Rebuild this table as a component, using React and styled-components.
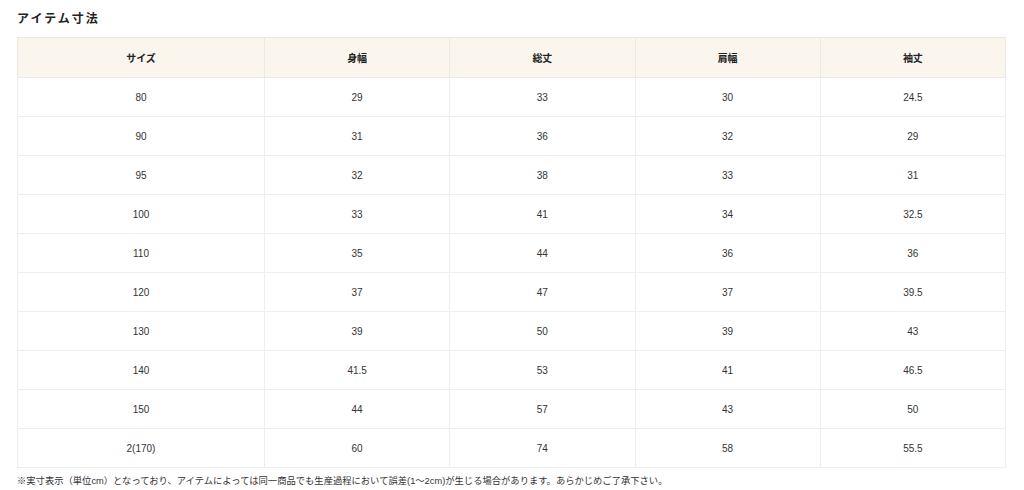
import styled, { createGlobalStyle } from "styled-components";

const GlobalStyle = createGlobalStyle`
  body {
    margin: 0;
    background: #fff;
    font-family: "Liberation Sans", "Noto Sans CJK JP", sans-serif;
    color: #333;
  }
`;

const headers = ["サイズ", "身幅", "総丈", "肩幅", "袖丈"];

const rows = [
  ["80", "29", "33", "30", "24.5"],
  ["90", "31", "36", "32", "29"],
  ["95", "32", "38", "33", "31"],
  ["100", "33", "41", "34", "32.5"],
  ["110", "35", "44", "36", "36"],
  ["120", "37", "47", "37", "39.5"],
  ["130", "39", "50", "39", "43"],
  ["140", "41.5", "53", "41", "46.5"],
  ["150", "44", "57", "43", "50"],
  ["2(170)", "60", "74", "58", "55.5"],
];

const App = () => {
  return (
    <Page>
      <GlobalStyle />
      <Title>アイテム寸法</Title>
      <SizeTable>
        <colgroup>
          <col style={{ width: "25%" }} />
          <col />
          <col />
          <col />
          <col />
        </colgroup>
        <thead>
          <tr>
            {headers.map((h) => (
              <HeadCell key={h}>{h}</HeadCell>
            ))}
          </tr>
        </thead>
        <tbody>
          {rows.map((row) => (
            <tr key={row[0]}>
              {row.map((v, i) => (
                <Cell key={i}>{v}</Cell>
              ))}
            </tr>
          ))}
        </tbody>
      </SizeTable>
      <Note>
        ※実寸表示（単位cm）となっており、アイテムによっては同一商品でも生産過程において誤差(1〜2cm)が生じる場合があります。あらかじめご了承下さい。
      </Note>
    </Page>
  );
};

const Page = styled.div`
  width: 989px;
  padding: 10px 0 0 17px;
`;

const Title = styled.h2`
  margin: 0 0 12px;
  font-family: "Noto Sans CJK JP", sans-serif;
  font-size: 12px;
  font-weight: 700;
  letter-spacing: 2px;
  line-height: 15px;
  color: #222;
`;

const SizeTable = styled.table`
  width: 100%;
  border-collapse: collapse;
  table-layout: fixed;
`;

const HeadCell = styled.th`
  height: 39px;
  padding: 0;
  background: #faf6ed;
  border: 1px solid #ece9e3;
  font-family: "Noto Sans CJK JP", sans-serif;
  font-size: 10px;
  font-weight: 700;
  color: #222;
  text-align: center;
`;

const Cell = styled.td`
  height: 38px;
  padding: 0;
  border: 1px solid #eeeeee;
  font-size: 10px;
  color: #333;
  text-align: center;
`;

const Note = styled.p`
  margin: 7px 0 0;
  font-family: "Liberation Sans", "Noto Sans CJK JP", sans-serif;
  font-size: 9.3px;
  line-height: 12px;
  color: #333;
`;

export default App;
